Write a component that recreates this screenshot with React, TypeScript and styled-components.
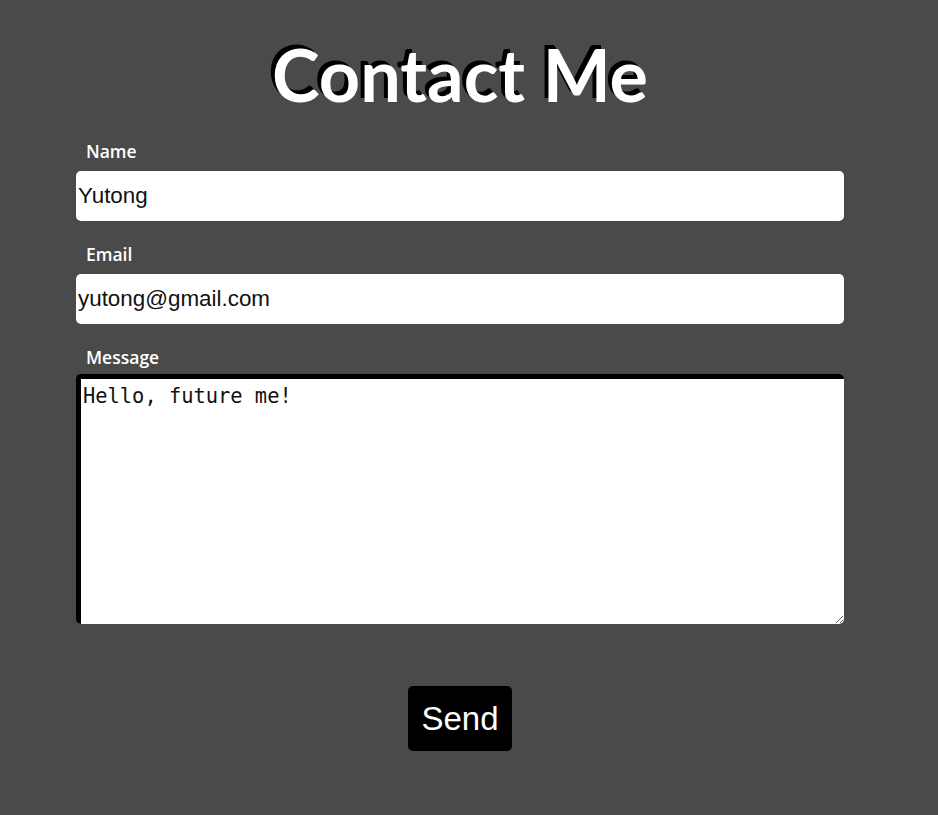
import React from "react";
import styled, { createGlobalStyle } from "styled-components";

const Global = createGlobalStyle`
  html, body { margin: 0; padding: 0; background: #4a4a4a; }
  body { font-family: "Liberation Sans", Arial, sans-serif; }
`;

const Page = styled.main`
  width: 768px;
  margin-left: 76px;
  display: flex;
  flex-direction: column;
  align-items: stretch;
`;

const Title = styled.h1`
  margin: 30px 0 0 0;
  text-align: center;
  font-family: Lato, "Open Sans", sans-serif;
  font-weight: 700;
  font-size: 72px;
  line-height: 88px;
  letter-spacing: 0;
  color: #fff;
  text-shadow: -4px -4px 0 #000;
`;

const Form = styled.form`
  display: flex;
  flex-direction: column;
  margin-top: 21px;
`;

const Label = styled.label`
  display: block;
  padding-left: 10px;
  font-family: "Open Sans", "Noto Sans", sans-serif;
  font-weight: 600;
  font-size: 17.5px;
  line-height: 24px;
  color: #fff;
  margin-bottom: 8px;
`;

const Field = styled.div`
  display: flex;
  flex-direction: column;
  margin-bottom: 21px;
`;

const Input = styled.input`
  box-sizing: border-box;
  width: 100%;
  height: 50px;
  border: none;
  border-radius: 5px;
  background: #fff;
  padding: 0 2px;
  font-family: "Liberation Sans", Arial, sans-serif;
  font-size: 22.4px;
  color: #111;
  outline: none;
`;

const TextArea = styled.textarea`
  box-sizing: border-box;
  width: 100%;
  height: 250px;
  margin-top: -3px;
  border-top: 5px solid #000;
  border-left: 5px solid #000;
  border-right: none;
  border-bottom: none;
  border-radius: 5px;
  background: #fff;
  padding: 4px 2px;
  font-family: "DejaVu Sans Mono", "Liberation Mono", monospace;
  font-size: 20.4px;
  line-height: 26px;
  color: #111;
  outline: none;
  resize: vertical;
`;

const Actions = styled.div`
  display: flex;
  justify-content: center;
  margin-top: 41px;
`;

const SendButton = styled.button`
  background: #000;
  color: #fff;
  border: none;
  border-radius: 5px;
  height: 65px;
  padding: 0 13px;
  font-family: "Liberation Sans", Arial, sans-serif;
  font-size: 33px;
  cursor: pointer;
`;

export default function App() {
  return (
    <>
      <Global />
      <Page>
        <Title>Contact Me</Title>
        <Form onSubmit={(e) => e.preventDefault()}>
          <Field>
            <Label htmlFor="name">Name</Label>
            <Input id="name" type="text" defaultValue="Yutong" />
          </Field>
          <Field>
            <Label htmlFor="email">Email</Label>
            <Input id="email" type="email" defaultValue="yutong@gmail.com" />
          </Field>
          <Field>
            <Label htmlFor="message">Message</Label>
            <TextArea id="message" defaultValue="Hello, future me!" />
          </Field>
          <Actions>
            <SendButton type="submit">Send</SendButton>
          </Actions>
        </Form>
      </Page>
    </>
  );
}
